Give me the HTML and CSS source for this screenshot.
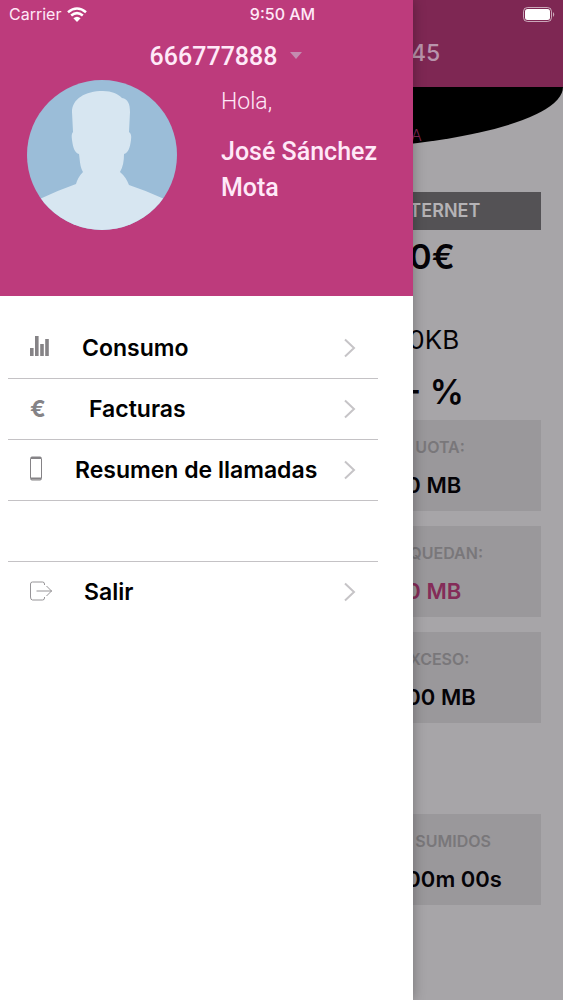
FILE: index.html
```html
<!DOCTYPE html>
<html lang="es">
<head>
<meta charset="utf-8">
<meta name="viewport" content="width=device-width, initial-scale=1">
<title>Consumo</title>
<link rel="stylesheet" href="styles.css">
</head>
<body>
<div class="app">
  <main class="page">
    <header class="page-header"><span class="strip">45</span></header>
    <div class="dome"><span class="strip dome-text">A</span></div>
    <div class="page-body">
      <h2 class="section-title">TERNET</h2>
      <p class="price">0€</p>
      <p class="amount">0KB</p>
      <p class="percent">- %</p>
      <section class="card"><h3 class="inset">UOTA:</h3><p>0 MB</p></section>
      <section class="card"><h3>QUEDAN:</h3><p class="left">0 MB</p></section>
      <section class="card"><h3>XCESO:</h3><p>00 MB</p></section>
      <section class="card calls"><h3 class="inset">SUMIDOS</h3><p>00m 00s</p></section>
    </div>
  </main>

  <aside class="drawer">
    <header class="profile">
      <div class="account">
        <select class="line" aria-label="Línea"><option>666777888</option></select>
        <svg class="caret" viewBox="0 0 12 7" aria-hidden="true"><path d="M0 0h12L6 7z"/></svg>
      </div>
      <div class="user">
        <svg class="avatar" viewBox="0 0 150 150" aria-hidden="true">
          <defs><clipPath id="round"><circle cx="75" cy="75" r="75"/></clipPath></defs>
          <g clip-path="url(#round)">
            <path fill="#9bbdd8" d="M0 0h150v150H0z"/>
            <path fill="#d7e6f1" d="M0 124L15 118Q32 110 49 104Q51 97 56 92C53 87 53 81 52 74C48 73 46 68 45 60Q44 54 46 52L45 32C45 19 58 11 76 11C85 11 91 14 95 18C101 19 103 24 103 32L102 52Q105 54 104 60C103 68 101 73 97 74C97 81 96 87 93 92Q99 97 102 105Q120 111 135 118L150 124V150H0z"/>
          </g>
        </svg>
        <div class="greeting">
          <p class="hello">Hola,</p>
          <p class="name">José Sánchez Mota</p>
        </div>
      </div>
    </header>
    <nav>
      <ul class="menu">
        <li><a href="#consumo">
          <svg class="icon icon-chart" viewBox="0 0 19 22" aria-hidden="true"><path d="M0 13h3.600v8H0zM5 1h3.600v20H5zM10.200 9h3.600v12h-3.600zM15.200 4h3.600v17h-3.600z"/></svg>
          <span>Consumo</span><svg class="chevron" viewBox="0 0 12 20" aria-hidden="true"><path d="M1 1.500l9 8.500-9 8.500"/></svg></a></li>
        <li><a href="#facturas">
          <span class="icon icon-euro" aria-hidden="true">€</span>
          <span>Facturas</span><svg class="chevron" viewBox="0 0 12 20" aria-hidden="true"><path d="M1 1.500l9 8.500-9 8.500"/></svg></a></li>
        <li><a href="#llamadas">
          <svg class="icon icon-phone" viewBox="0 0 12 26" aria-hidden="true"><rect x=".5" y="1" width="11" height="23" rx="1.500"/><path d="M1 2h10M1 22.500h10" stroke-width="2"/></svg>
          <span>Resumen de llamadas</span><svg class="chevron" viewBox="0 0 12 20" aria-hidden="true"><path d="M1 1.500l9 8.500-9 8.500"/></svg></a></li>
        <li class="spacer"></li>
        <li><a href="#salir">
          <svg class="icon icon-exit" viewBox="0 0 23 22" aria-hidden="true"><path d="M14.500 4V3q0-2-2-2h-10q-2 0-2 2v13q0 3 2 3h10q2 0 2-2v-1M6.500 10H22M16.500 5l5 5-5 5"/></svg>
          <span>Salir</span><svg class="chevron" viewBox="0 0 12 20" aria-hidden="true"><path d="M1 1.500l9 8.500-9 8.500"/></svg></a></li>
      </ul>
    </nav>
  </aside>

  <div class="status">
    <span class="carrier">Carrier
      <svg class="wifi" viewBox="0 0 20 15" aria-hidden="true"><g fill="none" stroke="#fff" stroke-width="2.600"><path d="M1 5.200Q10-2.200 19 5.200M4.200 8.600Q10 3.800 15.800 8.600"/></g><path fill="#fff" d="M6.400 11.200Q10 8.200 13.600 11.200L10 15z"/></svg>
    </span>
    <span class="time">9:50 AM</span>
    <svg class="battery" viewBox="0 0 33 15" aria-hidden="true"><rect x=".5" y=".5" width="28" height="14" rx="4" fill="none" stroke="#fff" stroke-opacity=".6"/><rect x="2" y="2" width="25" height="11" rx="2.500" fill="#fff"/><path fill="#fff" fill-opacity=".6" d="M30 5q2.500 2.500 0 5z"/></svg>
  </div>
</div>
</body>
</html>
```
FILE: styles.css
```css
* { box-sizing: border-box; }
body {
  margin: 0;
  font-family: Inter, "Liberation Sans", sans-serif;
  color: #050307;
}
h2, h3, p, ul { margin: 0; padding: 0; }

.app {
  position: relative;
  min-height: 100vh;
  overflow: hidden;
}

/* Dimmed page below the drawer */
.page {
  min-height: 100vh;
  background: #a7a5a8;
}
.strip { padding-left: 73%; }
.page-header {
  height: 87px;
  padding-top: 38px;
  background: #7e2753;
  color: #b994ac;
  font-size: 23px;
  font-weight: 500;
  line-height: 30px;
}
.dome {
  height: 64px;
  padding-top: 38px;
  background: #000;
  border-radius: 0 0 50% 50% / 0 0 100% 100%;
}
.dome-text {
  color: #7e2753;
  font-size: 16px;
  font-weight: 300;
  line-height: 20px;
}
.page-body {
  padding: 41px 22px 0 0;
  margin-left: 72%;
}
.section-title {
  height: 38px;
  padding-left: 4px;
  background: #545255;
  color: #b5b3b6;
  font-size: 18px;
  font-weight: 600;
  line-height: 38px;
}
.price, .amount, .percent { padding-left: 4px; }
.price {
  font-size: 34px;
  font-weight: 600;
  line-height: 54px;
}
.amount {
  margin-top: 34px;
  padding-left: 3px;
  font-size: 26px;
  line-height: 44px;
}
.percent {
  padding: 2px 0 0;
  font-size: 34px;
  font-weight: 600;
  line-height: 56px;
}
.card {
  height: 91px;
  margin-bottom: 15px;
  padding: 15px 0 0 4px;
  background: #9a989b;
}
.card h3 {
  color: #79777a;
  font-size: 16px;
  font-weight: 600;
  line-height: 24px;
}
.card .inset { padding-left: 6px; }
.card p {
  margin: 11px 0 0 -3px;
  font-size: 22px;
  font-weight: 600;
  line-height: 30px;
}
.card .left { color: #842c58; }
.calls { margin-top: 91px; }

/* Drawer */
.drawer {
  position: absolute;
  top: 0;
  bottom: 0;
  left: 0;
  width: 73.4%;
  background: #fff;
  box-shadow: 0 0 12px rgba(0, 0, 0, 0.3);
}
.profile {
  height: 296px;
  padding: 41px 27px 0;
  background: #bd3b7c;
  color: #ffe9f8;
  font-family: Roboto, sans-serif;
}
.account {
  display: flex;
  align-items: center;
  justify-content: center;
  gap: 12px;
  height: 32px;
  padding-left: 38px;
}
.line {
  appearance: none;
  padding: 0;
  border: 0;
  background: none;
  color: inherit;
  font: 500 25px/32px Roboto, sans-serif;
}
.caret {
  width: 12px;
  height: 7px;
  margin-bottom: 3px;
  fill: #c48bb0;
}
.user {
  display: flex;
  gap: 44px;
  padding-top: 7px;
}
.avatar {
  flex: none;
  width: 150px;
  height: 150px;
}
.greeting { margin-right: -12px; }
.hello {
  padding-top: 6px;
  font-size: 23px;
  font-weight: 300;
  line-height: 32px;
}
.name {
  margin-top: 16px;
  font-size: 25px;
  font-weight: 500;
  line-height: 36px;
}
.menu {
  padding: 22px 35px 0 8px;
  list-style: none;
}
.menu li {
  height: 61px;
  border-bottom: 1px solid #c4c2c5;
}
.menu li:last-child { border-bottom: 0; }
.menu a {
  display: flex;
  align-items: center;
  height: 60px;
  padding: 0 22px;
  color: #000;
  font-size: 23px;
  font-weight: 600;
  text-decoration: none;
}
.icon {
  flex: none;
  height: 22px;
  fill: #858386;
}
.icon-chart { width: 19px; margin: 0 33px 4px 0; }
.icon-euro {
  width: 17px;
  height: auto;
  margin-right: 42px;
  color: #858386;
  font-weight: 700;
}
.icon-phone {
  width: 12px;
  height: 26px;
  margin: 0 33px 3px 0;
  fill: none;
  stroke: #858386;
}
.icon-exit {
  width: 23px;
  margin: 0 31px 1px 0;
  fill: none;
  stroke: #969497;
}
.chevron {
  flex: none;
  width: 12px;
  height: 20px;
  margin-left: auto;
  fill: none;
  stroke: #c6c4c7;
  stroke-width: 2;
}

/* Status bar over both layers */
.status {
  position: absolute;
  top: 0;
  left: 0;
  right: 0;
  display: grid;
  grid-template-columns: 1fr auto 1fr;
  align-items: center;
  height: 28px;
  padding: 0 7px 0 9px;
  color: #ffe9f8;
  font-size: 16px;
}
.carrier {
  display: flex;
  align-items: center;
  gap: 6px;
}
.wifi { width: 20px; height: 15px; }
.time { font-weight: 500; }
.battery {
  width: 33px;
  height: 15px;
  justify-self: end;
}
```
